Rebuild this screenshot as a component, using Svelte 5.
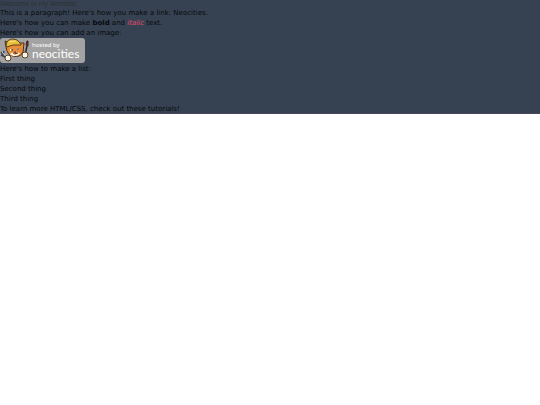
<script>
  const things = ['First thing', 'Second thing', 'Third thing'];
</script>

<main class="page">
  <h1 class="page__title">Welcome to my Website!</h1>
  <p>This is a paragraph! Here's how you make a link: <a href="#neocities">Neocities</a>.</p>
  <p>Here's how you can make <strong>bold</strong> and <em>italic</em> text.</p>
  <p>Here's how you can add an image:</p>

  <svg class="badge" viewBox="0 0 85 25" role="img" aria-label="Hosted by Neocities">
    <rect width="85" height="25" rx="3" fill="#a3a3a3" />
    <!-- tools -->
    <path d="M1 14L4 18M4 13L3 17L9 23M1 17L5 19" fill="none" stroke="#39424c" stroke-width="1.5" />
    <path d="M2 14L8 21" stroke="#d5dce1" stroke-width="1" />
    <path d="M25 17L27 8" stroke="#292321" stroke-width="1.5" />
    <path d="M26 7L27 3L28 3L28 8Z" fill="#a83036" stroke="#30231f" stroke-width="1" />
    <!-- cat -->
    <path d="M6 9L5 3L9 5Q15 0 20 5L24 5L23 14Q20 20 13 18Q7 17 6 9Z" fill="#e98d38" stroke="#49321a" stroke-width="1" />
    <path d="M10 16Q12 14 15 15Q18 14 20 15Q19 18 15 18Q11 18 10 16Z" fill="#fff0d8" />
    <path d="M6 7Q7 1 13 1Q18 1 20 5L21 7L13 7L7 9Z" fill="#e7bd3d" stroke="#5a431c" stroke-width="1" />
    <path d="M9 4L16 3" stroke="#ffe17b" stroke-width="1" />
    <path d="M10 12H12M17 11H19" stroke="#fff0d8" stroke-width="2" />
    <path d="M12 11V13M18 10V12" stroke="#2b211c" stroke-width="1" />
    <path d="M14 14H16L15 16L13 15M15 16L18 15" fill="none" stroke="#683924" stroke-width="1" />
    <circle cx="8" cy="20" r="3" fill="#fff3e2" stroke="#54402d" stroke-width="1" />
    <circle cx="25" cy="17" r="3" fill="#fff3e2" stroke="#54402d" stroke-width="1" />
    <text class="badge__small" x="32" y="9">hosted by</text>
    <text class="badge__name" x="32" y="20">neocities</text>
  </svg>

  <p>Here's how to make a list:</p>
  <ul>
    {#each things as thing (thing)}
      <li>{thing}</li>
    {/each}
  </ul>
  <p>To learn more HTML/CSS, check out these <a href="#tutorials">tutorials</a>!</p>
</main>

<style>
  :global(body) {
    margin: 0;
    background: #fff;
  }

  .page {
    background: #364252;
    box-shadow: inset 0 -1px #49475a;
    color: #07090c;
    font-family: "DejaVu Sans", Verdana, sans-serif;
    font-size: 7px;
    line-height: 10px;
  }

  .page__title {
    margin: 0;
    color: #2c3036;
    font-family: "Liberation Sans", Arial, sans-serif;
    font-size: 7px;
    font-weight: 400;
    line-height: 8px;
  }

  p,
  ul {
    margin: 0;
    padding: 0;
  }

  ul {
    list-style: none;
  }

  a {
    color: inherit;
    text-decoration: none;
  }

  em {
    color: #e8486c;
  }

  .badge {
    display: block;
    width: 85px;
    height: 25px;
    margin-bottom: 1px;
  }

  .badge__small,
  .badge__name {
    fill: #fff;
  }

  .badge__small {
    font-family: "Noto Sans", sans-serif;
    font-size: 6px;
  }

  .badge__name {
    font-family: Lato, "Noto Sans", sans-serif;
    font-size: 12px;
  }
</style>
